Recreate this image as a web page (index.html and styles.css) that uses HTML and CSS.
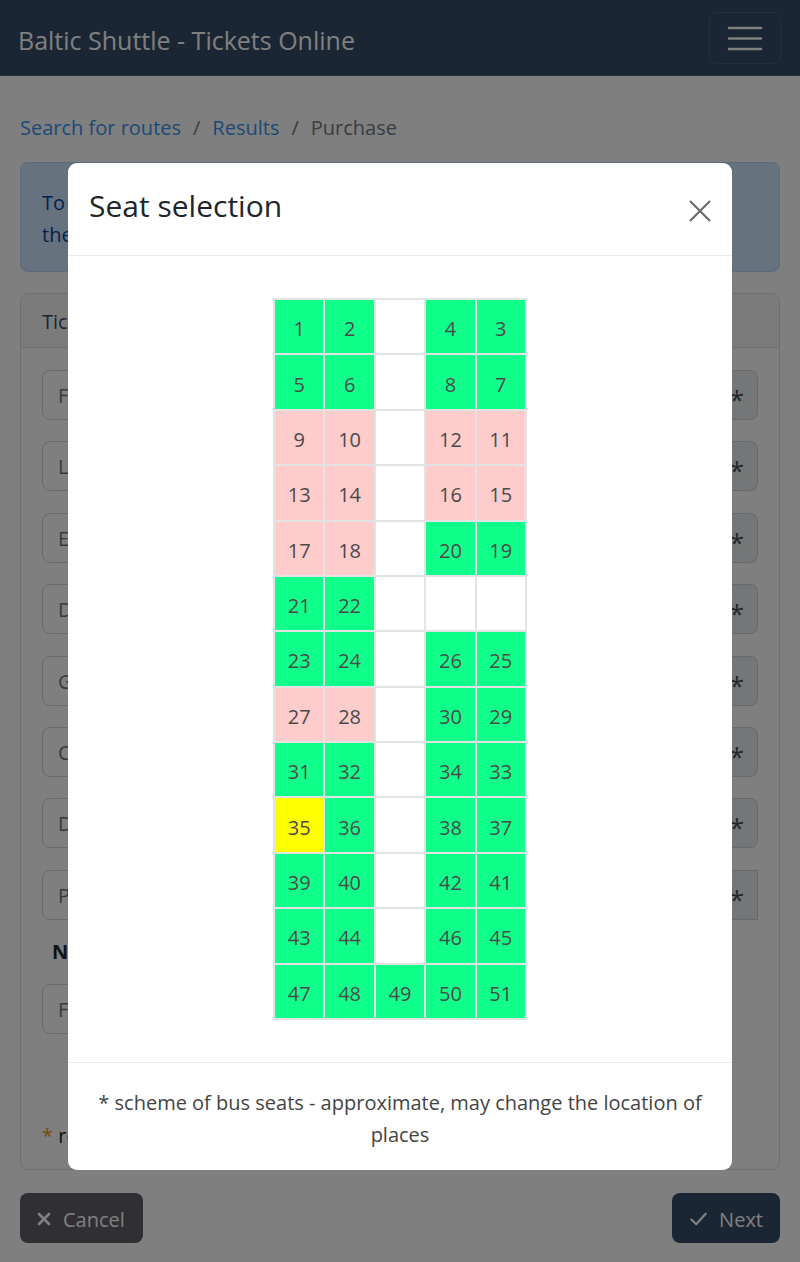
FILE: index.html
```html
<!DOCTYPE html>
<html lang="en">
<head>
<meta charset="utf-8">
<title>Baltic Shuttle - Tickets Online</title>
<link rel="stylesheet" href="styles.css">
</head>
<body>
<header class="navbar">
  <span class="brand">Baltic Shuttle - Tickets Online</span>
  <span class="toggler">
    <svg width="36" height="26" viewBox="0 0 36 26"><path d="M2 3H34M2 13.5H34M2 24H34" stroke="#fff" stroke-width="2.6" stroke-linecap="round" fill="none"/></svg>
  </span>
</header>

<main class="main">
  <nav class="breadcrumb">
    <a class="crumb-link">Search for routes</a><span class="sep">/</span><a class="crumb-link">Results</a><span class="sep">/</span><span class="crumb-active">Purchase</span>
  </nav>

  <div class="alert">To complete the purchase, fill in the passenger details and choose<br>the seat on the bus scheme</div>

  <section class="card">
    <div class="card-header">Tickets</div>
    <div class="card-body">
      <div class="input-group"><span class="input">First name</span><span class="addon">*</span></div>
      <div class="input-group"><span class="input">Last name</span><span class="addon">*</span></div>
      <div class="input-group"><span class="input">E-mail</span><span class="addon">*</span></div>
      <div class="input-group"><span class="input">Date of birth</span><span class="addon">*</span></div>
      <div class="input-group"><span class="input">Gender</span><span class="addon">*</span></div>
      <div class="input-group"><span class="input">Citizenship</span><span class="addon">*</span></div>
      <div class="input-group"><span class="input">Document number</span><span class="addon">*</span></div>
      <div class="input-group"><span class="input">Phone</span><span class="addon addon-flat">*</span></div>
      <div class="label">Note</div>
      <div class="input input-single">Free text</div>
      <div class="required"><span class="star">*</span> required fields</div>
    </div>
  </section>

  <div class="actions">
    <span class="btn btn-cancel">
      <svg width="14" height="14" viewBox="0 0 14 14"><path d="M2 2L12 12M12 2L2 12" stroke="#fff" stroke-width="2.8" stroke-linecap="round"/></svg>
      <span class="btn-text">Cancel</span>
    </span>
    <span class="btn btn-next">
      <svg width="18" height="14" viewBox="0 0 18 14"><path d="M1.5 7.5L6.5 12.5L16.5 1.5" stroke="#fff" stroke-width="2.4" fill="none" stroke-linecap="round" stroke-linejoin="round"/></svg>
      <span class="btn-text">Next</span>
    </span>
  </div>
</main>

<div class="backdrop"></div>

<div class="modal-wrap">
  <div class="modal">
    <div class="modal-header">
      <h5 class="modal-title">Seat selection</h5>
      <svg class="close" width="24" height="24" viewBox="0 0 24 24"><path d="M2 2L22 22M22 2L2 22" stroke="#6b6b6b" stroke-width="2.2"/></svg>
    </div>
    <div class="modal-body">
      <div class="seatmap">
        <div class="seat free">1</div><div class="seat free">2</div><div class="seat"></div><div class="seat free">4</div><div class="seat free">3</div>
        <div class="seat free">5</div><div class="seat free">6</div><div class="seat"></div><div class="seat free">8</div><div class="seat free">7</div>
        <div class="seat taken">9</div><div class="seat taken">10</div><div class="seat"></div><div class="seat taken">12</div><div class="seat taken">11</div>
        <div class="seat taken">13</div><div class="seat taken">14</div><div class="seat"></div><div class="seat taken">16</div><div class="seat taken">15</div>
        <div class="seat taken">17</div><div class="seat taken">18</div><div class="seat"></div><div class="seat free">20</div><div class="seat free">19</div>
        <div class="seat free">21</div><div class="seat free">22</div><div class="seat"></div><div class="seat"></div><div class="seat"></div>
        <div class="seat free">23</div><div class="seat free">24</div><div class="seat"></div><div class="seat free">26</div><div class="seat free">25</div>
        <div class="seat taken">27</div><div class="seat taken">28</div><div class="seat"></div><div class="seat free">30</div><div class="seat free">29</div>
        <div class="seat free">31</div><div class="seat free">32</div><div class="seat"></div><div class="seat free">34</div><div class="seat free">33</div>
        <div class="seat selected">35</div><div class="seat free">36</div><div class="seat"></div><div class="seat free">38</div><div class="seat free">37</div>
        <div class="seat free">39</div><div class="seat free">40</div><div class="seat"></div><div class="seat free">42</div><div class="seat free">41</div>
        <div class="seat free">43</div><div class="seat free">44</div><div class="seat"></div><div class="seat free">46</div><div class="seat free">45</div>
        <div class="seat free">47</div><div class="seat free">48</div><div class="seat free">49</div><div class="seat free">50</div><div class="seat free">51</div>
      </div>
    </div>
    <div class="modal-footer">* scheme of bus seats - approximate, may change the location of places</div>
  </div>
</div>
</body>
</html>
```

FILE: styles.css
```css
* { box-sizing: border-box; }
html, body { margin: 0; padding: 0; }
body {
  font-family: "Open Sans", "Noto Sans", sans-serif;
  font-size: 20px;
  line-height: 32px;
  color: #212529;
  background: #fff;
  height: 1262px;
  overflow: hidden;
}

.navbar {
  height: 76px;
  background: #344c66;
  border-bottom: 1px solid #4a5f77;
  display: flex;
  align-items: center;
  justify-content: space-between;
  padding: 0 19px 0 18px;
}
.brand { color: #fff; font-size: 25px; line-height: 32px; padding-top: 4px; }
.toggler {
  width: 72px;
  height: 52px;
  border: 1px solid rgba(255,255,255,0.12);
  border-radius: 8px;
  display: flex;
  align-items: center;
  justify-content: center;
}

.main { padding: 36px 20px 0; }

.breadcrumb { display: flex; align-items: center; height: 32px; margin-bottom: 18px; }
.crumb-link { color: #3a92ee; }
.sep { color: #747b82; padding: 0 12px; }
.crumb-active { color: #747b82; }

.alert {
  background: #cfe4ff;
  border: 1px solid #b6d4fe;
  border-radius: 8px;
  color: #084298;
  padding: 24px 21px 20px;
  margin-bottom: 21px;
}

.card {
  border: 1px solid #dfdfdf;
  border-radius: 8px;
}
.card-header {
  height: 54px;
  background: #f7f7f7;
  border-bottom: 1px solid #dfdfdf;
  padding: 12px 21px 8px;
  color: #344a66;
  border-radius: 8px 8px 0 0;
}
.card-body { padding: 22px 21px 17px; }

.input-group { display: flex; height: 50px; margin-bottom: 21.4px; }
.input {
  flex: 1;
  height: 50px;
  border: 1px solid #ced4da;
  border-radius: 8px 0 0 8px;
  padding: 9px 15px 7px;
  color: #6c757d;
  background: #fff;
}
.addon {
  width: 41px;
  border: 1px solid #ced4da;
  border-left: none;
  border-radius: 0 8px 8px 0;
  background: #e9ecef;
  color: #495057;
  font-size: 26px;
  display: flex;
  align-items: center;
  justify-content: center;
  padding-top: 8px;
}
.addon-flat { border-radius: 0; }
.input-group:nth-child(8) { margin-bottom: 16px; }

.label { font-weight: 700; padding-left: 10px; margin-bottom: 16px; color: #212529; }
.input-single { flex: none; width: 60%; border-radius: 8px; }
.required { margin-top: 86px; color: #212529; }
.star { color: #f0900e; }

.actions { display: flex; justify-content: space-between; margin-top: 23px; }
.btn {
  height: 50px;
  border-radius: 8px;
  color: #fff;
  display: inline-flex;
  align-items: center;
  gap: 12px;
  padding: 0 17px;
}
.btn-text { padding-top: 4px; }
.btn svg { margin-top: 2px; }
.btn-cancel { background: #5e5e68; width: 123px; }
.btn-next { background: #344c66; width: 108px; padding-left: 18px; }

.backdrop {
  position: fixed;
  inset: 0;
  background: rgba(0,0,0,0.5);
}

.modal-wrap {
  position: fixed;
  inset: 0;
  display: flex;
  justify-content: center;
  align-items: flex-start;
  padding-top: 163px;
}
.modal {
  width: 664px;
  background: #fff;
  border-radius: 9px;
}
.modal-header {
  height: 93px;
  border-bottom: 1px solid #e9ecef;
  display: flex;
  align-items: center;
  justify-content: space-between;
  padding: 0 20px 0 21px;
}
.modal-title {
  margin: 0 0 7px;
  font-size: 30px;
  font-weight: 400;
  line-height: 45px;
  color: #212529;
}
.close { display: block; margin-top: 4px; }

.modal-body { padding: 42px 0 42px; display: flex; justify-content: center; }
.seatmap {
  width: 254px;
  height: 722px;
  padding: 2px;
  gap: 2px;
  background: #e3e3e3;
  display: grid;
  grid-template-columns: repeat(5, 1fr);
  grid-template-rows: repeat(13, 1fr);
}
.seat {
  background: #fff;
  color: #4a4a4a;
  display: flex;
  align-items: center;
  justify-content: center;
  font-size: 20px;
  padding-top: 5px;
}
.seat.free { background: #10ff8a; }
.seat.taken { background: #ffcccc; }
.seat.selected { background: #ffff00; }

.modal-footer {
  border-top: 1px solid #e9ecef;
  padding: 24px 22px 19px;
  text-align: center;
  color: #444;
}
```
